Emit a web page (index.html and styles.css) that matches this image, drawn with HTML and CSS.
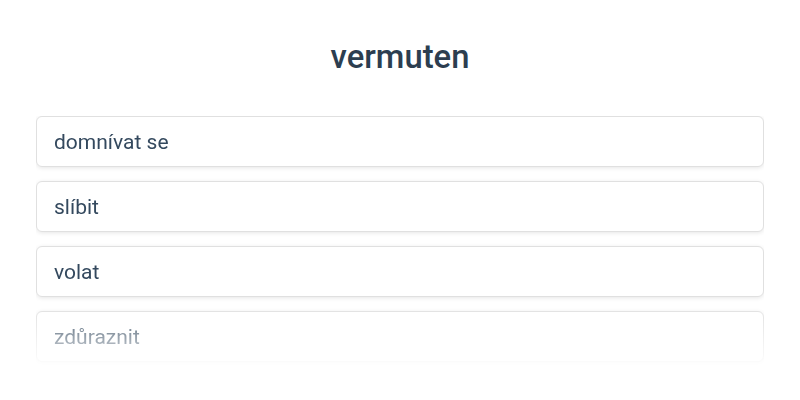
FILE: index.html
```html
<!DOCTYPE html>
<html lang="cs">
<head>
<meta charset="utf-8">
<link rel="stylesheet" href="styles.css">
</head>
<body>
<main class="page">
  <h1 class="word">vermuten</h1>
  <div class="options">
    <div class="option">domnívat se</div>
    <div class="option">slíbit</div>
    <div class="option">volat</div>
    <div class="option">zdůraznit</div>
  </div>
</main>
</body>
</html>
```
FILE: styles.css
```css
html, body {
  margin: 0;
  padding: 0;
  background: #ffffff;
}
body {
  font-family: Roboto, "Noto Sans", sans-serif;
  color: #2c3e50;
}
.page {
  width: 800px;
  height: 400px;
  box-sizing: border-box;
  padding: 37px 36px 0;
  overflow: hidden;
}
.word {
  margin: 0 0 39px;
  text-align: center;
  font-size: 32.8px;
  font-weight: 500;
  line-height: 40px;
  color: #2c3e50;
}
.options {
  display: flex;
  flex-direction: column;
  gap: 14px;
  padding-bottom: 20px;
  -webkit-mask-image: linear-gradient(to bottom, #000 0, #000 190px, rgba(0,0,0,0) 254px);
  mask-image: linear-gradient(to bottom, #000 0, #000 190px, rgba(0,0,0,0) 254px);
}
.option {
  box-sizing: border-box;
  height: 51px;
  padding: 0 17px;
  display: flex;
  align-items: center;
  font-size: 21px;
  color: #34495e;
  background: #fff;
  border: 1px solid #e0e0e0;
  border-radius: 6px;
  box-shadow: 0 1px 4px rgba(0,0,0,0.1);
}
```
